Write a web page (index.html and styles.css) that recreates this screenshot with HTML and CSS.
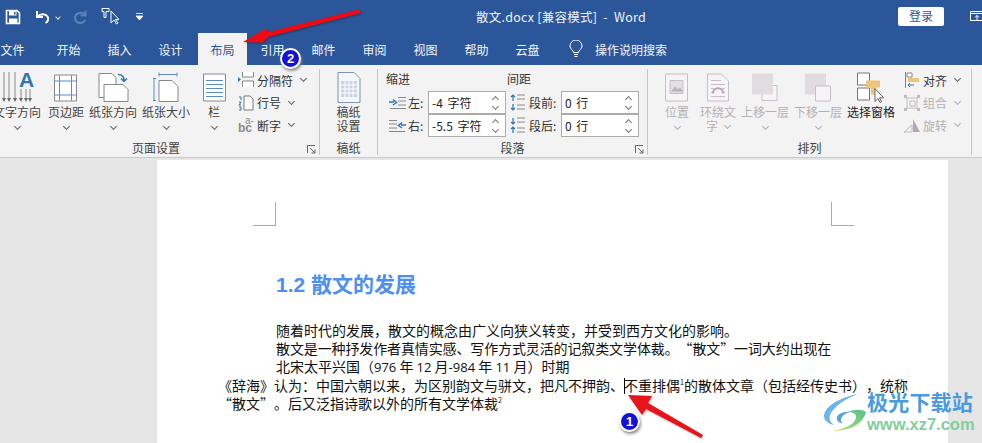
FILE: index.html
```html
<!DOCTYPE html>
<html>
<head>
	<title>散文.docx [兼容模式] - Word</title>
	<meta charset="utf-8">
	<link rel="stylesheet" href="styles.css">
</head>
<body>
	<!-- title bar -->
	<div class="titlebar">
		<div class="qat">
			<svg class="qat-save" width="16" height="16" viewBox="0 0 16 16"><path d="M1.500 1.500h10.500l2.500 2.500v10.500h-13z" fill="none" stroke="#fff" stroke-width="1.600"/><path d="M4 2h7.500v4.500H4z M4 9.500h8.500V14H4z" fill="#fff"/><path d="M9 3h1.500v2.500H9z" fill="#2b579a"/></svg>
			<svg class="qat-undo" width="16" height="16" viewBox="0 0 16 16"><path d="M2 2v6h6 M2.500 7.500c3-3 8-3 10 0c1.500 2.500 .5 5-2 6.500" fill="none" stroke="#fff" stroke-width="2"/></svg>
			<span class="caret-light qat-caret"></span>
			<svg class="qat-redo" width="15" height="16" viewBox="0 0 15 16"><path d="M12.500 1.500v5h-5 M12 5.500c-3-3-9-2-10 2.500c-.5 4 3 6.500 6 6c2-.3 3.500-1.500 4.500-3" fill="none" stroke="#5f80b4" stroke-width="2"/></svg>
			<svg class="qat-touch" width="18" height="18" viewBox="0 0 18 18"><path d="M1 1.500h7v3h-3v6h-2v-6h-2z" fill="none" stroke="#fff"/><path d="M10 4v12l3-3 2.500 4 1.500-1-2.500-3.500h3.500z" fill="#2b579a" stroke="#fff"/></svg>
			<svg class="qat-more" width="7" height="8" viewBox="0 0 7 8"><path d="M0 .5h7M0 3h7l-3.500 4z" fill="#fff" stroke="#fff" stroke-width=".8"/></svg>
		</div>
		<div class="doc-title">散文.docx [兼容模式]&nbsp; - &nbsp;Word</div>
		<div class="login">登录</div>
		<svg class="restore" width="14" height="11" viewBox="0 0 14 11"><path d="M.5.500h13v9h-13z M.5 2.500h13 M7 9V4.500M5 6.500l2-2 2 2" fill="none" stroke="#fff"/></svg>
	</div>

	<!-- tabs -->
	<div class="tabs">
		<div class="tab first">文件</div>
		<div class="tab">开始</div>
		<div class="tab">插入</div>
		<div class="tab">设计</div>
		<div class="tab active">布局</div>
		<div class="tab">引用</div>
		<div class="tab">邮件</div>
		<div class="tab">审阅</div>
		<div class="tab">视图</div>
		<div class="tab">帮助</div>
		<div class="tab">云盘</div>
		<svg class="bulb" width="14" height="18" viewBox="0 0 14 18"><path d="M4.500 12.500c0-2-3.500-3.500-3.500-6.500a6 6 0 0 1 12 0c0 3-3.500 4.500-3.500 6.500z M5 14.500h4 M5.500 16.500h3" fill="none" stroke="#fff"/></svg>
		<div class="tell">操作说明搜索</div>
	</div>

	<!-- ribbon -->
	<div class="ribbon">
		<div class="group g-page">
			<div class="group-body">
				<div class="btn w-dir">
					<svg width="36" height="33" viewBox="0 0 36 33"><path d="M5 1v28M10 1v28M16 1v28M22 18v11M27 18v11M31 18v11" stroke="#888" fill="none"/><path d="M3 27l2 4 2-4zM8 27l2 4 2-4zM14 27l2 4 2-4zM20 27l2 4 2-4zM25 27l2 4 2-4zM29 27l2 4 2-4z" fill="#666"/><text x="20" y="16" class="icon-a">A</text></svg>
					<span class="label">文字方向</span><span class="caret"></span>
				</div>
				<div class="btn w-margin">
					<svg width="24" height="30" viewBox="0 0 24 30"><path d="M.5 2.500h22v26h-22z" fill="#fff" stroke="#888"/><path d="M5.500 3v25M17.500 3v25M1 8.500h21M1 22.500h21" stroke="#5b8fc4" fill="none"/></svg>
					<span class="label">页边距</span><span class="caret"></span>
				</div>
				<div class="btn w-orient">
					<svg width="31" height="30" viewBox="0 0 31 30"><path d="M1 1h13l4 4v20h-17z" fill="#fff" stroke="#888"/><path d="M6 12h19l5 5v12h-24z" fill="#fff" stroke="#888"/><path d="M20 2c4 0 6 2 6 6M23 6l3 3 3-3" fill="none" stroke="#2f75b5" stroke-width="1.500"/></svg>
					<span class="label">纸张方向</span><span class="caret"></span>
				</div>
				<div class="btn w-size">
					<svg width="26" height="30" viewBox="0 0 26 30"><path d="M6 2h18M6 0v4M24 0v4M1 6v22M-1 6h4M-1 28h4" stroke="#5b8fc4" fill="none"/><path d="M6 8h13l6 6v15h-19z" fill="#fff" stroke="#888"/></svg>
					<span class="label">纸张大小</span><span class="caret"></span>
				</div>
				<div class="btn w-cols">
					<svg width="23" height="28" viewBox="0 0 23 28"><path d="M.5.500h22v27h-22z" fill="#fff" stroke="#888"/><path d="M3 7h17M3 11h17M3 15h17M3 19h17M3 23h17" stroke="#5b8fc4" fill="none"/></svg>
					<span class="label">栏</span><span class="caret"></span>
				</div>
				<div class="smalls page-smalls">
					<div class="small">
						<svg width="16" height="16" viewBox="0 0 16 16"><path d="M4.500 0v5h11V0M4.500 15v-6h11v6" fill="#fff" stroke="#888"/><path d="M0 5l3 2.500L0 10z" fill="#2f75b5"/></svg>
						<span>分隔符</span><span class="caret"></span>
					</div>
					<div class="small">
						<svg width="16" height="16" viewBox="0 0 16 16"><path d="M6 1h6l3 3v11H6z" fill="#fff" stroke="#777"/><path d="M1 2h2v3M1 7h2l-2 3h2M1 12h2v3H1" fill="none" stroke="#2f75b5"/></svg>
						<span>行号</span><span class="caret"></span>
					</div>
					<div class="small">
						<svg width="16" height="16" viewBox="0 0 16 16"><text x="0" y="15" class="icon-bc">bc</text><text x="7" y="7" class="icon-hy">a-</text></svg>
						<span>断字</span><span class="caret"></span>
					</div>
				</div>
			</div>
			<div class="group-label">页面设置<svg class="launcher" width="9" height="9" viewBox="0 0 9 9"><path d="M.5 8V.5H8M3 3l5 5M8 4.500V8H4.500" fill="none" stroke="#666"/></svg></div>
		</div>

		<div class="group g-paper">
			<div class="group-body">
				<div class="btn w-paper">
					<svg width="24" height="31" viewBox="0 0 24 31"><path d="M1 .5h16l6 6v24H1z" fill="#f4f6fa" stroke="#7d93b0"/><path d="M4 9h16v16H4z" fill="#c9d4e4"/><path d="M4 13h16M4 17h16M4 21h16M8 9v16M12 9v16M16 9v16" stroke="#fff" fill="none"/></svg>
					<span class="label">稿纸<br>设置</span>
				</div>
			</div>
			<div class="group-label">稿纸</div>
		</div>

		<div class="group g-para">
			<div class="group-body para-body">
				<div class="para-heads"><span class="head-indent">缩进</span><span>间距</span></div>
				<div class="para-row">
					<svg class="para-icon" width="17" height="12" viewBox="0 0 17 12"><path d="M9 .5h8M9 4h8M9 8h8M1 11.500h16" stroke="#888" fill="none"/><path d="M0 5h5M4 2.500L7.500 5.500 4 8" stroke="#2f75b5" fill="none" stroke-width="1.500"/></svg>
					<span class="para-label">左:</span>
					<div class="spin"><span>-4 字符</span><i class="arrows"></i></div>
					<svg class="para-icon2" width="15" height="17" viewBox="0 0 15 17"><path d="M7 1h8M7 5h8M7 11h8M7 15h8" stroke="#888" fill="none"/><path d="M3 1v6M1 3l2-2 2 2M3 10v6M1 14l2 2 2-2" stroke="#2f75b5" fill="none" stroke-width="1.200"/></svg>
					<span class="para-label2">段前:</span>
					<div class="spin"><span>0 行</span><i class="arrows"></i></div>
				</div>
				<div class="para-row">
					<svg class="para-icon" width="17" height="12" viewBox="0 0 17 12"><path d="M0 .5h8M0 4h8M0 8h8M0 11.500h16" stroke="#888" fill="none"/><path d="M17 5h-5M13 2.500L9.500 5.500 13 8" stroke="#2f75b5" fill="none" stroke-width="1.500"/></svg>
					<span class="para-label">右:</span>
					<div class="spin"><span>-5.5 字符</span><i class="arrows"></i></div>
					<svg class="para-icon2" width="15" height="17" viewBox="0 0 15 17"><path d="M7 1h8M7 5h8M7 11h8M7 15h8" stroke="#888" fill="none"/><path d="M3 1v6M1 5l2 2 2-2M3 10v6M1 12l2-2 2 2" stroke="#2f75b5" fill="none" stroke-width="1.200"/></svg>
					<span class="para-label2">段后:</span>
					<div class="spin"><span>0 行</span><i class="arrows"></i></div>
				</div>
			</div>
			<div class="group-label">段落<svg class="launcher" width="9" height="9" viewBox="0 0 9 9"><path d="M.5 8V.5H8M3 3l5 5M8 4.500V8H4.500" fill="none" stroke="#666"/></svg></div>
		</div>

		<div class="group g-arrange">
			<div class="group-body">
				<div class="btn w-pos off">
					<svg width="24" height="28" viewBox="0 0 24 28"><path d="M.5.500h22v27H.5z" fill="#f6f4f6" stroke="#c6c0c6"/><path d="M5 7h13v13H5z" fill="#e2dee2" stroke="#c6c0c6"/><path d="M6 18l4-5 3 3 2-2 3 4z" fill="#b8b2b8"/></svg>
					<span class="label">位置</span><span class="caret"></span>
				</div>
				<div class="btn w-wrap off">
					<svg width="22" height="28" viewBox="0 0 22 28"><path d="M.5.500h14l7 7v20H.5z" fill="#f6f4f6" stroke="#c6c0c6"/><path d="M4 7h10M4 11h14M4 15h3M15 15h3M4 19h2M16 19h2M4 23h14" stroke="#c6c0c6"/><path d="M6 20c0-7 10-7 10 0" fill="none" stroke="#b0aab0" stroke-width="2"/></svg>
					<span class="label">环绕文<br>字<span class="caret inline"></span></span>
				</div>
				<div class="btn w-front off">
					<svg width="26" height="28" viewBox="0 0 26 28"><path d="M10 12h15v15H10z" fill="#f6f4f6" stroke="#c6c0c6"/><path d="M0 0h21v21H0z" fill="#e0dce0"/></svg>
					<span class="label">上移一层</span><span class="caret"></span>
				</div>
				<div class="btn w-back off">
					<svg width="26" height="28" viewBox="0 0 26 28"><path d="M0 0h21v21H0z" fill="#e0dce0"/><path d="M10.500 12.500h15v15h-15z" fill="#f6f4f6" stroke="#c6c0c6"/></svg>
					<span class="label">下移一层</span>
					<span class="caret"></span>
				</div>
				<div class="btn w-pane">
					<svg width="28" height="30" viewBox="0 0 28 30"><path d="M.5.500h12v12H.5zM.5 15.500h12v12H.5z" fill="#fff" stroke="#777"/><path d="M9 8h14v7h-4v7h-5v-7H9z" fill="#edc478"/><path d="M18 16v13l3-3 2 4 1.500-.7-2-4h4z" fill="#fff" stroke="#666"/></svg>
					<span class="label dark">选择窗格</span>
				</div>
				<div class="smalls arrange-smalls">
					<div class="small">
						<svg width="16" height="16" viewBox="0 0 16 16"><path d="M1.500 0v16" stroke="#888"/><path d="M3 1h5v4H3z" fill="#fff" stroke="#888"/><path d="M4 6h11v4H4z" fill="#edc478"/><path d="M4 13h6M6 11l-2 2 2 2" fill="none" stroke="#2f75b5"/></svg>
						<span>对齐</span><span class="caret"></span>
					</div>
					<div class="small off">
						<svg width="16" height="16" viewBox="0 0 16 16"><path d="M3 3h10v10H3z" fill="none" stroke="#c0bac0"/><path d="M0 0h3v3H0zM13 0h3v3h-3zM0 13h3v3H0zM13 13h3v3h-3z" fill="#c0bac0"/><path d="M6 6h5v5H6z" fill="none" stroke="#c0bac0"/></svg>
						<span>组合</span><span class="caret"></span>
					</div>
					<div class="small off">
						<svg width="16" height="16" viewBox="0 0 16 16"><path d="M0 15L8 8v7z" fill="none" stroke="#c0bac0"/><path d="M9 15V2l7 13z" fill="#b0aab0"/></svg>
						<span>旋转</span><span class="caret"></span>
					</div>
				</div>
			</div>
			<div class="group-label">排列</div>
		</div>
	</div>

	<!-- document area -->
	<div class="workspace">
		<div class="page">
			<div class="marks"><i class="mark-l"></i><i class="mark-r"></i></div>
			<h2 class="heading">1.2 散文的发展</h2>
			<div class="body-text">
				<p class="ind">随着时代的发展，散文的概念由广义向狭义转变，并受到西方文化的影响。</p>
				<p class="ind tight">散文是一种抒发作者真情实感、写作方式灵活的记叙类文学体裁。“散文”一词大约出现在</p>
				<p class="ind">北宋太平兴国（<span class="latin">976</span> 年 <span class="latin">12</span> 月<span class="latin">-984</span> 年 <span class="latin">11</span> 月）时期</p>
				<p>《辞海》认为：中国六朝以来，为区别韵文与骈文，把凡不押韵、<span class="cursor"></span>不重排偶<sup>1</sup>的散体文章（包括经传史书），统称</p>
				<p>“散文”。后又泛指诗歌以外的所有文学体裁<sup>2</sup></p>
			</div>
		</div>
	</div>

	<!-- callouts over the window -->
	<svg class="callouts" width="982" height="443" viewBox="0 0 982 443">
		<path d="M359 9.500L361 13 268 37l-5 5.500L243 42l23-13.500 2 3.500z" fill="#f00a12"/>
		<path d="M703 435L648 403l4-7-24-1 14 20 4-6 55 29z" fill="#e8141c"/>
	</svg>
	<div class="badge b-one">1</div>
	<div class="badge b-two">2</div>

	<div class="watermark">
		<svg width="48" height="40" viewBox="0 0 48 40">
			<defs>
				<linearGradient id="swoosh" x1="1" y1="0" x2="0" y2="1">
					<stop offset="0" stop-color="#58c08a"/>
					<stop offset=".65" stop-color="#8fd67e"/>
					<stop offset="1" stop-color="#f0e46a"/>
				</linearGradient>
			</defs>
			<path d="M36 0C20 3 3 11 2 22c0 5 5 8 10 9-4-3-6-7-3-12C14 11 25 4 36 0z" fill="#6fb4e8"/>
			<path d="M44 18C41 30 28 37 10 37c12-2 22-6 24-13 1-4-3-6-8-6 6-3 14-3 18 0z" fill="url(#swoosh)"/>
			<path d="M28 18c-6-1-14 2-13 7 0 3 3 4 6 4-2-1-3-3-1-6 2-3 5-4 8-5z" fill="#5aa3d8"/>
		</svg>
		<div>
			<div class="wm-name">极光下载站</div>
			<div class="wm-url">www.xz7.com</div>
		</div>
	</div>
</body>
</html>
```

FILE: styles.css
```css
html,body{
	margin:0;
	height:443px;
	overflow:hidden;
}
body{
	width:982px;
	position:relative;
	background:#e6e6e6;
	font-family:"Noto Sans CJK SC","Noto Sans",sans-serif;
	font-size:12px;
	color:#333;
}

/* title bar */
.titlebar{
	height:33px;
	background:#2b579a;
	color:#fff;
	display:flex;
	align-items:center;
}
.qat{
	width:476px;
	flex:none;
	display:flex;
	align-items:center;
}
.qat-save{margin-left:5px}
.qat-undo{margin-left:14px}
.qat-caret{margin-left:5px}
.qat-redo{margin-left:13px}
.qat-touch{margin-left:13px;margin-top:-2px}
.qat-more{margin-left:17px}
.doc-title{
	font-size:12.500px;
	letter-spacing:.25px;
	white-space:nowrap;
	color:#eef2f8;
}
.login{
	margin-left:auto;
	width:46px;
	height:19px;
	line-height:18px;
	text-align:center;
	background:#fff;
	color:#2b579a;
	border-radius:2px;
}
.restore{
	margin:0 -2px 0 26px;
	flex:none;
}

/* tabs */
.tabs{
	height:32px;
	background:#2b579a;
	color:#f2f5fa;
	display:flex;
	font-size:12px;
}
.tab{
	width:51px;
	flex:none;
	text-align:center;
	line-height:33px;
}
.tab.first{
	width:61px;
	margin-left:-18px;
}
.tab.active{
	width:49px;
	margin-left:2px;
	background:#f3f3f3;
	color:#2b579a;
}
.bulb{
	margin:7px 0 0 16px;
}
.tell{
	margin-left:12px;
	line-height:33px;
	white-space:nowrap;
}

/* ribbon */
.ribbon{
	height:92px;
	background:#f3f3f3;
	border-bottom:1px solid #c9c9c9;
	display:flex;
	overflow:hidden;
}
.group{
	flex:none;
	height:86px;
	margin-top:4px;
	border-right:1px solid #c6c6c6;
	display:flex;
	flex-direction:column;
}
.g-page{width:326px;margin-left:-7px}
.g-paper{width:57px}
.g-para{width:269px}
.g-arrange{width:323px}
.group-body{
	height:68px;
	flex:none;
	display:flex;
	padding-top:2px;
	box-sizing:border-box;
}
.group-label{
	height:18px;
	line-height:22px;
	text-align:center;
	font-size:12px;
	position:relative;
	color:#444;
}
.launcher{
	position:absolute;
	right:3px;
	bottom:1px;
}

.btn{
	flex:none;
	display:flex;
	flex-direction:column;
	align-items:center;
	position:relative;
}
.btn svg{
	height:33px;
	flex:none;
}
.label{
	display:block;
	margin-top:1px;
	line-height:14px;
	font-size:12px;
	text-align:center;
	white-space:nowrap;
	color:#444;
}
.label.dark{color:#222}
.w-dir{width:48px}
.w-margin{width:50px}
.w-orient{width:44px}
.w-size{width:62px}
.w-cols{width:34px}
.w-paper{width:57px}
.w-pos{width:44px;margin-left:7px}
.w-wrap{width:38px}
.w-front{width:56px}
.w-back{width:50px}
.w-pane{width:56px}

.caret,.caret-light{
	display:inline-block;
	width:4px;
	height:4px;
	border-right:1px solid #666;
	border-bottom:1px solid #666;
	transform:rotate(45deg);
}
.btn > .caret{margin-top:5px}
.caret.inline{margin:0 0 3px 7px}
.caret-light{
	width:3px;
	height:3px;
	border-color:#dfe6f0;
}
.off{color:#b5b0b5}
.off .label,.off span{color:#b5b0b5}
.off .caret{border-color:#b5b0b5}

.smalls{
	display:flex;
	flex-direction:column;
	margin-top:-2px;
}
.page-smalls{margin-left:7px}
.arrange-smalls{margin-left:5px}
.small{
	height:22.500px;
	display:flex;
	align-items:center;
	gap:3px;
	font-size:12px;
	white-space:nowrap;
}
.small .caret{margin:-3px 0 0 5px}

.icon-a{
	font:bold 21px "Liberation Sans",sans-serif;
	fill:#2f75b5;
}
.icon-bc{
	font:bold 12px "Liberation Sans",sans-serif;
	fill:#8a8a8a;
}
.icon-hy{
	font:10px "Liberation Sans",sans-serif;
	fill:#8a8a8a;
}

/* paragraph group */
.para-body{
	display:block;
	padding:0 0 0 8px;
}
.para-heads{
	height:22px;
	line-height:20px;
	display:flex;
}
.head-indent{width:121px}
.para-row{
	height:23px;
	display:flex;
	align-items:center;
}
.para-icon{width:17px;margin-left:3px;flex:none}
.para-label{width:20px;margin-left:2px}
.spin{
	width:78px;
	height:23px;
	box-sizing:border-box;
	border:1px solid #ababab;
	background:#fff;
	padding-left:3px;
	line-height:21px;
	font-size:12px;
	word-spacing:2px;
	color:#222;
	position:relative;
}
.arrows::before,.arrows::after{
	content:"";
	position:absolute;
	right:7px;
	width:4px;
	height:4px;
	border-left:1px solid #777;
	border-top:1px solid #777;
	transform:rotate(45deg);
}
.arrows::before{top:5px}
.arrows::after{top:12px;transform:rotate(225deg)}
.para-icon2{margin-left:4px;flex:none}
.para-label2{width:32px;margin-left:4px}

/* document */
.workspace{
	display:flex;
	padding:2px 0 0 157px;
}
.page{
	width:791px;
	height:300px;
	background:#fff;
	color:#111;
}
.marks{
	padding:42px 94px 0 96px;
	display:flex;
	justify-content:space-between;
}
.marks i{
	display:block;
	width:22px;
	height:23px;
	border-bottom:1px solid #aaa;
}
.mark-l{border-right:1px solid #aaa}
.mark-r{border-left:1px solid #aaa}
.heading{
	margin:45px 0 0 119px;
	font:bold 21px/28px "Liberation Sans","Noto Sans CJK SC",sans-serif;
	color:#4f8ff0;
}
.body-text{
	margin-top:22px;
	padding-left:61px;
	font-size:14px;
	line-height:18px;
	white-space:nowrap;
	text-spacing-trim:space-all;
}
.body-text p{margin:0}
.ind{padding-left:58px}
.tight{letter-spacing:-.12px}
.latin{font-family:"Open Sans",sans-serif;font-size:13px}
.body-text sup{
	font-size:7px;
	line-height:0;
}
.cursor{
	display:inline-block;
	width:1px;
	height:16px;
	background:#000;
	vertical-align:-3px;
	margin-right:-1px;
}

/* callouts */
.callouts{
	position:absolute;
	left:0;
	top:0;
	pointer-events:none;
	filter:drop-shadow(1px 1px 1px rgba(0,0,0,.3));
}
.badge{
	position:absolute;
	width:17px;
	height:17px;
	text-align:center;
	border-radius:50%;
	background:#1212d8;
	border:2px solid #fff;
	box-shadow:1px 2px 3px #888;
	color:#fff;
	font:bold 13px/17px "Liberation Sans",sans-serif;
}
.b-one{left:619px;top:411px}
.b-two{left:280px;top:48px}
.watermark{
	position:absolute;
	left:822px;
	top:388px;
	display:flex;
	align-items:flex-start;
}
.watermark svg{margin-top:6px;margin-right:-3px}
.wm-name{
	font-size:21px;
	font-weight:700;
	line-height:27px;
	letter-spacing:.2px;
	color:#4a9ade;
}
.wm-url{
	font:bold 16.500px/19px "Liberation Sans",sans-serif;
	color:#7fd09a;
}
```
